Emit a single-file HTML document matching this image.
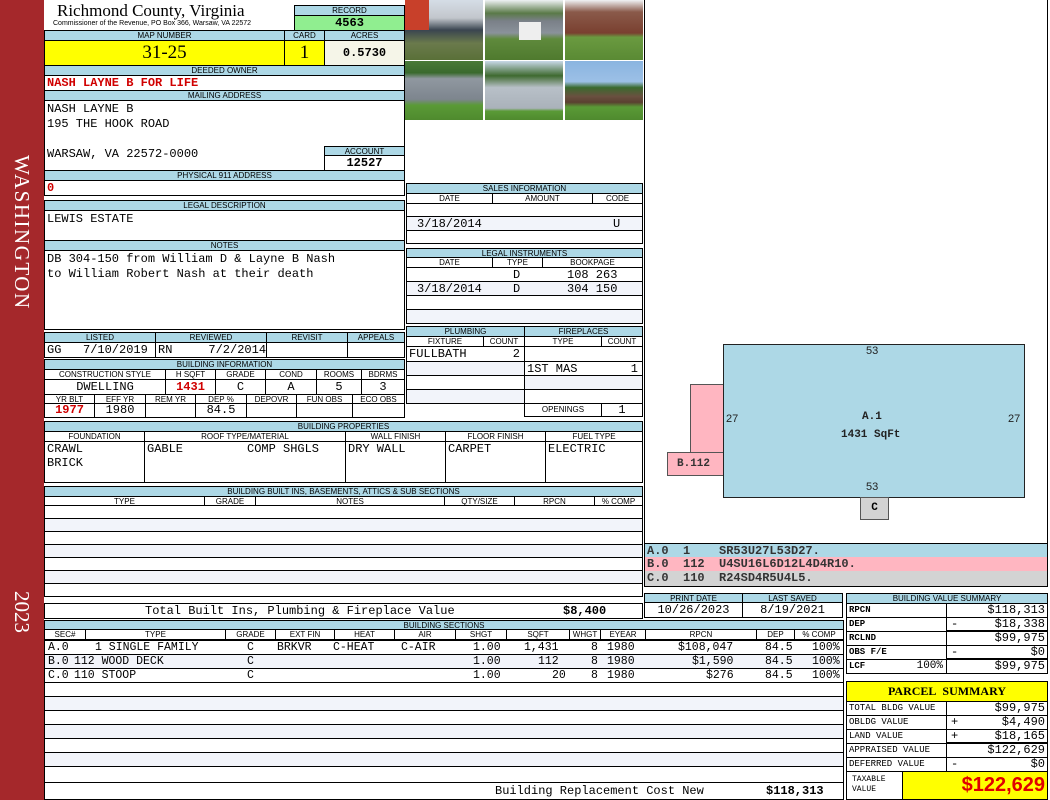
<!DOCTYPE html>
<html><head><meta charset="utf-8"><style>
*{margin:0;padding:0;box-sizing:border-box}
body{width:1050px;height:800px;position:relative;background:#fff;overflow:hidden;font-family:"Liberation Mono",monospace;font-size:12px;color:#000}
div{position:absolute}
.c{border:1px solid #000;background:#fff;white-space:nowrap;overflow:hidden;padding:0 2px}
.l{background:#add8e6;font-family:"Liberation Sans",sans-serif;font-size:8px;text-align:center;line-height:9px}
.r{text-align:right}.ce{text-align:center}
.red{color:#d00000;font-weight:bold}
.st{background:#f2f4fa}
</style></head><body>
<div style="left:0;top:0;width:44px;height:800px;background:#a5282b"></div>
<div style="left:7px;top:155px;width:30px;height:175px;color:#fff;font-family:'Liberation Serif',serif;font-size:21px;letter-spacing:1.5px;writing-mode:vertical-rl;line-height:30px">WASHINGTON</div>
<div style="left:7px;top:591px;width:30px;height:40px;color:#fff;font-family:'Liberation Serif',serif;font-size:21px;writing-mode:vertical-rl;line-height:30px">2023</div>

<div style="left:57px;top:1px;font-family:'Liberation Serif',serif;font-size:17px;line-height:20px">Richmond County, Virginia</div>
<div style="left:53px;top:20px;font-family:'Liberation Sans',sans-serif;font-size:7px;line-height:8px">Commissioner of the Revenue, PO Box 366, Warsaw, VA 22572</div>
<div class="c l" style="left:294px;top:5px;width:111px;height:11px">RECORD</div>
<div class="c" style="left:294px;top:15px;width:111px;height:16px;background:#90ee90;text-align:center;font-weight:bold;line-height:14px;font-size:12px">4563</div>
<div class="c l" style="left:44px;top:30px;width:241px;height:11px">MAP NUMBER</div>
<div class="c l" style="left:284px;top:30px;width:41px;height:11px">CARD</div>
<div class="c l" style="left:324px;top:30px;width:81px;height:11px">ACRES</div>
<div class="c" style="left:44px;top:40px;width:241px;height:26px;background:#ffff00;font-family:'Liberation Serif',serif;font-size:19px;text-align:center;line-height:24px">31-25</div>
<div class="c" style="left:284px;top:40px;width:41px;height:26px;background:#ffff00;font-family:'Liberation Serif',serif;font-size:19px;text-align:center;line-height:24px">1</div>
<div class="c" style="left:324px;top:40px;width:81px;height:26px;background:#f5f5e8;text-align:center;font-weight:bold;line-height:24px">0.5730</div>
<div class="c l" style="left:44px;top:65px;width:361px;height:11px">DEEDED OWNER</div>
<div class="c red" style="left:44px;top:75px;width:361px;height:16px;line-height:15px">NASH LAYNE B FOR LIFE</div>
<div class="c l" style="left:44px;top:90px;width:361px;height:11px">MAILING ADDRESS</div>
<div class="c" style="left:44px;top:100px;width:361px;height:71px;line-height:15px;padding-top:1px">NASH LAYNE B<br>195 THE HOOK ROAD<br><br>WARSAW, VA 22572-0000</div>
<div class="c l" style="left:324px;top:146px;width:81px;height:10px">ACCOUNT</div>
<div class="c" style="left:324px;top:155px;width:81px;height:16px;text-align:center;font-weight:bold;line-height:14px">12527</div>
<div class="c l" style="left:44px;top:170px;width:361px;height:11px">PHYSICAL 911 ADDRESS</div>
<div class="c red" style="left:44px;top:180px;width:361px;height:16px;line-height:15px">0</div>
<div class="c l" style="left:44px;top:200px;width:361px;height:11px">LEGAL DESCRIPTION</div>
<div class="c" style="left:44px;top:210px;width:361px;height:31px;line-height:16px">LEWIS ESTATE</div>
<div class="c l" style="left:44px;top:240px;width:361px;height:11px">NOTES</div>
<div class="c" style="left:44px;top:250px;width:361px;height:80px;line-height:15px;padding-top:1px">DB 304-150 from William D &amp; Layne B Nash<br>to William Robert Nash at their death</div>

<div class="c l" style="left:44px;top:332px;width:112px;height:11px">LISTED</div>
<div class="c l" style="left:155px;top:332px;width:112px;height:11px">REVIEWED</div>
<div class="c l" style="left:266px;top:332px;width:82px;height:11px">REVISIT</div>
<div class="c l" style="left:347px;top:332px;width:58px;height:11px">APPEALS</div>
<div class="c" style="left:44px;top:342px;width:112px;height:16px;line-height:14px">GG&nbsp;&nbsp;&nbsp;7/10/2019</div>
<div class="c" style="left:155px;top:342px;width:112px;height:16px;line-height:14px">RN&nbsp;&nbsp;&nbsp;&nbsp;&nbsp;7/2/2014</div>
<div class="c" style="left:266px;top:342px;width:82px;height:16px"></div>
<div class="c" style="left:347px;top:342px;width:58px;height:16px"></div>

<div class="c l" style="left:44px;top:359px;width:361px;height:11px">BUILDING INFORMATION</div>
<div class="c l" style="left:44px;top:369px;width:122px;height:11px;background:#fff">CONSTRUCTION STYLE</div>
<div class="c l" style="left:165px;top:369px;width:51px;height:11px;background:#fff">H SQFT</div>
<div class="c l" style="left:215px;top:369px;width:51px;height:11px;background:#fff">GRADE</div>
<div class="c l" style="left:265px;top:369px;width:52px;height:11px;background:#fff">COND</div>
<div class="c l" style="left:316px;top:369px;width:46px;height:11px;background:#fff">ROOMS</div>
<div class="c l" style="left:361px;top:369px;width:44px;height:11px;background:#fff">BDRMS</div>
<div class="c ce" style="left:44px;top:379px;width:122px;height:16px;line-height:14px">DWELLING</div>
<div class="c ce red" style="left:165px;top:379px;width:51px;height:16px;line-height:14px">1431</div>
<div class="c ce" style="left:215px;top:379px;width:51px;height:16px;line-height:14px">C</div>
<div class="c ce" style="left:265px;top:379px;width:52px;height:16px;line-height:14px">A</div>
<div class="c ce" style="left:316px;top:379px;width:46px;height:16px;line-height:14px">5</div>
<div class="c ce" style="left:361px;top:379px;width:44px;height:16px;line-height:14px">3</div>
<div class="c l" style="left:44px;top:394px;width:51px;height:10px;background:#fff">YR BLT</div>
<div class="c l" style="left:94px;top:394px;width:52px;height:10px;background:#fff">EFF YR</div>
<div class="c l" style="left:145px;top:394px;width:51px;height:10px;background:#fff">REM YR</div>
<div class="c l" style="left:195px;top:394px;width:52px;height:10px;background:#fff">DEP %</div>
<div class="c l" style="left:246px;top:394px;width:51px;height:10px;background:#fff">DEPOVR</div>
<div class="c l" style="left:296px;top:394px;width:57px;height:10px;background:#fff">FUN OBS</div>
<div class="c l" style="left:352px;top:394px;width:53px;height:10px;background:#fff">ECO OBS</div>
<div class="c ce red" style="left:44px;top:403px;width:51px;height:15px;line-height:13px">1977</div>
<div class="c ce" style="left:94px;top:403px;width:52px;height:15px;line-height:13px">1980</div>
<div class="c" style="left:145px;top:403px;width:51px;height:15px"></div>
<div class="c ce" style="left:195px;top:403px;width:52px;height:15px;line-height:13px">84.5</div>
<div class="c" style="left:246px;top:403px;width:51px;height:15px"></div>
<div class="c" style="left:296px;top:403px;width:57px;height:15px"></div>
<div class="c" style="left:352px;top:403px;width:53px;height:15px"></div>

<!-- photos -->
<div style="left:405px;top:0;width:78px;height:60px;overflow:hidden;background:linear-gradient(180deg,#d5dde6 0%,#c2c6cc 30%,#3a4550 50%,#6a7a4c 72%,#5a7038 100%)"><div style="left:0;top:0;width:24px;height:30px;background:#c8402a"></div></div>
<div style="left:485px;top:0;width:78px;height:60px;overflow:hidden;background:linear-gradient(180deg,#eef2f4 0%,#5a7a48 22%,#7a8088 35%,#8a929a 55%,#5f8a3c 65%,#4f7a2e 100%)"><div style="left:34px;top:22px;width:22px;height:18px;background:#eee"></div></div>
<div style="left:565px;top:0;width:78px;height:60px;background:linear-gradient(180deg,#f0f2f4 0%,#8a5a4a 20%,#7a4030 55%,#6a9a40 62%,#5a8a34 100%)"></div>
<div style="left:405px;top:61px;width:78px;height:59px;background:linear-gradient(180deg,#4a7a38 0%,#3a6a2e 20%,#9098a0 30%,#7d858e 65%,#5a9a36 75%,#4f8a2e 100%)"></div>
<div style="left:485px;top:61px;width:78px;height:59px;background:linear-gradient(180deg,#c8d8e8 0%,#3f6a30 25%,#b8c0c8 45%,#aab2ba 80%,#5a9a36 85%,#4f8a2e 100%)"></div>
<div style="left:565px;top:61px;width:78px;height:59px;background:linear-gradient(180deg,#8ab4e0 0%,#9cc0e6 35%,#3a6a2e 45%,#6a5040 60%,#5a4030 70%,#5a9a36 78%,#4f8a2e 100%)"></div>

<div class="c l" style="left:406px;top:183px;width:237px;height:11px">SALES INFORMATION</div>
<div class="c l" style="left:406px;top:193px;width:87px;height:11px;background:#fff">DATE</div>
<div class="c l" style="left:492px;top:193px;width:101px;height:11px;background:#fff">AMOUNT</div>
<div class="c l" style="left:592px;top:193px;width:51px;height:11px;background:#fff">CODE</div>
<div class="c" style="left:406px;top:203px;width:237px;height:14px"></div>
<div class="c st" style="left:406px;top:216px;width:237px;height:15px;line-height:14px;padding-left:10px">3/18/2014<span style="position:absolute;left:206px">U</span></div>
<div class="c" style="left:406px;top:230px;width:237px;height:14px"></div>
<div class="c l" style="left:406px;top:248px;width:237px;height:10px">LEGAL INSTRUMENTS</div>
<div class="c l" style="left:406px;top:257px;width:87px;height:11px;background:#fff">DATE</div>
<div class="c l" style="left:492px;top:257px;width:51px;height:11px;background:#fff">TYPE</div>
<div class="c l" style="left:542px;top:257px;width:101px;height:11px;background:#fff">BOOKPAGE</div>
<div class="c" style="left:406px;top:267px;width:237px;height:15px;line-height:14px"><span style="position:absolute;left:106px">D</span><span style="position:absolute;left:160px">108 263</span></div>
<div class="c st" style="left:406px;top:281px;width:237px;height:15px;line-height:14px;padding-left:10px">3/18/2014<span style="position:absolute;left:106px">D</span><span style="position:absolute;left:160px">304 150</span></div>
<div class="c" style="left:406px;top:295px;width:237px;height:15px"></div>
<div class="c st" style="left:406px;top:309px;width:237px;height:15px"></div>

<div class="c l" style="left:406px;top:326px;width:119px;height:11px">PLUMBING</div>
<div class="c l" style="left:524px;top:326px;width:119px;height:11px">FIREPLACES</div>
<div class="c l" style="left:406px;top:336px;width:78px;height:11px;background:#fff">FIXTURE</div>
<div class="c l" style="left:483px;top:336px;width:42px;height:11px;background:#fff">COUNT</div>
<div class="c l" style="left:524px;top:336px;width:78px;height:11px;background:#fff">TYPE</div>
<div class="c l" style="left:601px;top:336px;width:42px;height:11px;background:#fff">COUNT</div>
<div class="c" style="left:406px;top:346px;width:119px;height:16px;line-height:15px">FULLBATH<span style="position:absolute;right:4px">2</span></div>
<div class="c st" style="left:406px;top:361px;width:119px;height:15px"></div>
<div class="c" style="left:406px;top:375px;width:119px;height:15px"></div>
<div class="c st" style="left:406px;top:389px;width:119px;height:15px"></div>
<div class="c" style="left:524px;top:346px;width:119px;height:16px"></div>
<div class="c" style="left:524px;top:361px;width:119px;height:15px;line-height:14px">1ST MAS<span style="position:absolute;right:4px">1</span></div>
<div class="c st" style="left:524px;top:375px;width:119px;height:15px"></div>
<div class="c" style="left:524px;top:389px;width:119px;height:15px"></div>
<div class="c l" style="left:524px;top:403px;width:78px;height:14px;background:#fff;line-height:12px">OPENINGS</div>
<div class="c ce" style="left:601px;top:403px;width:42px;height:14px;line-height:12px">1</div>

<div class="c l" style="left:44px;top:421px;width:599px;height:11px">BUILDING PROPERTIES</div>
<div class="c l" style="left:44px;top:431px;width:101px;height:11px;background:#fff">FOUNDATION</div>
<div class="c l" style="left:144px;top:431px;width:202px;height:11px;background:#fff">ROOF TYPE/MATERIAL</div>
<div class="c l" style="left:345px;top:431px;width:101px;height:11px;background:#fff">WALL FINISH</div>
<div class="c l" style="left:445px;top:431px;width:101px;height:11px;background:#fff">FLOOR FINISH</div>
<div class="c l" style="left:545px;top:431px;width:98px;height:11px;background:#fff">FUEL TYPE</div>
<div class="c" style="left:44px;top:441px;width:101px;height:42px;line-height:14px">CRAWL<br>BRICK</div>
<div class="c" style="left:144px;top:441px;width:202px;height:42px;line-height:14px">GABLE<span style="position:absolute;left:102px">COMP SHGLS</span></div>
<div class="c" style="left:345px;top:441px;width:101px;height:42px;line-height:14px">DRY WALL</div>
<div class="c" style="left:445px;top:441px;width:101px;height:42px;line-height:14px">CARPET</div>
<div class="c" style="left:545px;top:441px;width:98px;height:42px;line-height:14px">ELECTRIC</div>

<div class="c l" style="left:44px;top:486px;width:599px;height:11px">BUILDING BUILT INS, BASEMENTS, ATTICS &amp; SUB SECTIONS</div>
<div class="c l" style="left:44px;top:496px;width:161px;height:10px;background:#fff">TYPE</div>
<div class="c l" style="left:204px;top:496px;width:52px;height:10px;background:#fff">GRADE</div>
<div class="c l" style="left:255px;top:496px;width:190px;height:10px;background:#fff">NOTES</div>
<div class="c l" style="left:444px;top:496px;width:71px;height:10px;background:#fff">QTY/SIZE</div>
<div class="c l" style="left:514px;top:496px;width:81px;height:10px;background:#fff">RPCN</div>
<div class="c l" style="left:594px;top:496px;width:49px;height:10px;background:#fff">% COMP</div>
<div class="c" style="left:44px;top:505px;width:599px;height:14px"></div>
<div class="c st" style="left:44px;top:518px;width:599px;height:14px"></div>
<div class="c" style="left:44px;top:531px;width:599px;height:14px"></div>
<div class="c st" style="left:44px;top:544px;width:599px;height:14px"></div>
<div class="c" style="left:44px;top:557px;width:599px;height:14px"></div>
<div class="c st" style="left:44px;top:570px;width:599px;height:14px"></div>
<div class="c" style="left:44px;top:583px;width:599px;height:14px"></div>
<div class="c" style="left:44px;top:603px;width:599px;height:16px;line-height:15px"><span style="position:absolute;left:100px">Total Built Ins, Plumbing &amp; Fireplace Value</span><span style="position:absolute;left:518px;font-weight:bold">$8,400</span></div>

<div class="c l" style="left:44px;top:620px;width:800px;height:10px">BUILDING SECTIONS</div>
<div class="c l" style="left:44px;top:629px;width:42px;height:11px;background:#fff">SEC#</div>
<div class="c l" style="left:85px;top:629px;width:141px;height:11px;background:#fff">TYPE</div>
<div class="c l" style="left:225px;top:629px;width:51px;height:11px;background:#fff">GRADE</div>
<div class="c l" style="left:275px;top:629px;width:60px;height:11px;background:#fff">EXT FIN</div>
<div class="c l" style="left:334px;top:629px;width:61px;height:11px;background:#fff">HEAT</div>
<div class="c l" style="left:394px;top:629px;width:62px;height:11px;background:#fff">AIR</div>
<div class="c l" style="left:455px;top:629px;width:52px;height:11px;background:#fff">SHGT</div>
<div class="c l" style="left:506px;top:629px;width:64px;height:11px;background:#fff">SQFT</div>
<div class="c l" style="left:569px;top:629px;width:32px;height:11px;background:#fff">WHGT</div>
<div class="c l" style="left:600px;top:629px;width:46px;height:11px;background:#fff">EYEAR</div>
<div class="c l" style="left:645px;top:629px;width:112px;height:11px;background:#fff">RPCN</div>
<div class="c l" style="left:756px;top:629px;width:39px;height:11px;background:#fff">DEP</div>
<div class="c l" style="left:794px;top:629px;width:50px;height:11px;background:#fff">% COMP</div>

<div class="c" style="left:44px;top:640px;width:800px;height:15px;line-height:14px;font-size:11.5px"><span style="position:absolute;left:3px">A.0</span><span style="position:absolute;left:50px">1 SINGLE FAMILY</span><span style="position:absolute;left:202px">C</span><span style="position:absolute;left:232px">BRKVR</span><span style="position:absolute;left:288px">C-HEAT</span><span style="position:absolute;left:356px">C-AIR</span><span style="position:absolute;left:428px">1.00</span><span style="position:absolute;left:479px">1,431</span><span style="position:absolute;left:546px">8</span><span style="position:absolute;left:562px">1980</span><span style="position:absolute;left:633px">$108,047</span><span style="position:absolute;left:720px">84.5</span><span style="position:absolute;left:767px">100%</span></div>
<div class="c st" style="left:44px;top:654px;width:800px;height:15px;line-height:14px;font-size:11.5px"><span style="position:absolute;left:3px">B.0</span><span style="position:absolute;left:29px">112 WOOD DECK</span><span style="position:absolute;left:202px">C</span><span style="position:absolute;left:428px">1.00</span><span style="position:absolute;left:493px">112</span><span style="position:absolute;left:546px">8</span><span style="position:absolute;left:562px">1980</span><span style="position:absolute;left:647px">$1,590</span><span style="position:absolute;left:720px">84.5</span><span style="position:absolute;left:767px">100%</span></div>
<div class="c" style="left:44px;top:668px;width:800px;height:15px;line-height:14px;font-size:11.5px"><span style="position:absolute;left:3px">C.0</span><span style="position:absolute;left:29px">110 STOOP</span><span style="position:absolute;left:202px">C</span><span style="position:absolute;left:428px">1.00</span><span style="position:absolute;left:507px">20</span><span style="position:absolute;left:546px">8</span><span style="position:absolute;left:562px">1980</span><span style="position:absolute;left:661px">$276</span><span style="position:absolute;left:720px">84.5</span><span style="position:absolute;left:767px">100%</span></div>
<div class="c" style="left:44px;top:682px;width:800px;height:15px"></div>
<div class="c st" style="left:44px;top:696px;width:800px;height:15px"></div>
<div class="c" style="left:44px;top:710px;width:800px;height:15px"></div>
<div class="c st" style="left:44px;top:724px;width:800px;height:15px"></div>
<div class="c" style="left:44px;top:738px;width:800px;height:15px"></div>
<div class="c st" style="left:44px;top:752px;width:800px;height:15px"></div>
<div class="c" style="left:44px;top:766px;width:800px;height:17px"></div>
<div class="c" style="left:44px;top:782px;width:800px;height:18px;line-height:16px"><span style="position:absolute;left:450px">Building Replacement Cost New</span><span style="position:absolute;left:721px;font-weight:bold">$118,313</span></div>

<div style="left:644px;top:0;width:1px;height:545px;background:#000"></div>
<div style="left:1047px;top:0;width:1px;height:545px;background:#000"></div>
<div style="left:690px;top:384px;width:34px;height:92px;background:#ffb6c1;border:1px solid #555;border-right:none"></div>
<div style="left:667px;top:452px;width:57px;height:24px;background:#ffb6c1;border:1px solid #555;border-right:none;font-size:11px;font-weight:bold;color:#333;line-height:22px;padding-left:9px">B.112</div>
<div style="left:723px;top:344px;width:302px;height:154px;background:#add8e6;border:1px solid #222"></div>
<div style="left:860px;top:497px;width:29px;height:23px;background:#d3d3d3;border:1px solid #555;font-size:11px;font-weight:bold;text-align:center;line-height:21px">C</div>
<div style="left:866px;top:345px;font-family:'Liberation Sans',sans-serif;font-size:11px;color:#222">53</div>
<div style="left:866px;top:481px;font-family:'Liberation Sans',sans-serif;font-size:11px;color:#222">53</div>
<div style="left:726px;top:413px;font-family:'Liberation Sans',sans-serif;font-size:11px;color:#222">27</div>
<div style="left:1008px;top:413px;font-family:'Liberation Sans',sans-serif;font-size:11px;color:#222">27</div>
<div style="left:862px;top:411px;font-size:11px;font-weight:bold;color:#222">A.1</div>
<div style="left:841px;top:429px;font-size:11px;font-weight:bold;color:#222">1431 SqFt</div>

<div class="c" style="left:644px;top:543px;width:404px;height:15px;background:#add8e6;font-weight:bold;line-height:14px;color:#333">A.0&nbsp;&nbsp;1&nbsp;&nbsp;&nbsp;&nbsp;SR53U27L53D27.</div>
<div class="c" style="left:644px;top:557px;width:404px;height:15px;background:#ffb6c1;font-weight:bold;line-height:14px;color:#333;border-top:none">B.0&nbsp;&nbsp;112&nbsp;&nbsp;U4SU16L6D12L4D4R10.</div>
<div class="c" style="left:644px;top:571px;width:404px;height:16px;background:#d3d3d3;font-weight:bold;line-height:14px;color:#333;border-top:none">C.0&nbsp;&nbsp;110&nbsp;&nbsp;R24SD4R5U4L5.</div>

<div class="c l" style="left:644px;top:593px;width:99px;height:10px">PRINT DATE</div>
<div class="c l" style="left:742px;top:593px;width:101px;height:10px">LAST SAVED</div>
<div class="c ce" style="left:644px;top:602px;width:99px;height:16px;line-height:14px">10/26/2023</div>
<div class="c ce" style="left:742px;top:602px;width:101px;height:16px;line-height:14px">8/19/2021</div>

<div class="c l" style="left:846px;top:593px;width:202px;height:11px">BUILDING VALUE SUMMARY</div>
<div class="c" style="left:846px;top:603px;width:101px;height:15px;font-size:9px;line-height:13px;font-weight:bold">RPCN</div>
<div class="c r" style="left:946px;top:603px;width:102px;height:15px;line-height:13px">$118,313</div>
<div class="c" style="left:846px;top:617px;width:101px;height:15px;font-size:9px;line-height:13px;font-weight:bold">DEP</div>
<div class="c r" style="left:946px;top:617px;width:102px;height:15px;line-height:13px;border-bottom:2px solid #000"><span style="position:absolute;left:4px">-</span>$18,338</div>
<div class="c" style="left:846px;top:631px;width:101px;height:15px;font-size:9px;line-height:13px;font-weight:bold">RCLND</div>
<div class="c r" style="left:946px;top:631px;width:102px;height:15px;line-height:13px">$99,975</div>
<div class="c" style="left:846px;top:645px;width:101px;height:15px;font-size:9px;line-height:13px;font-weight:bold">OBS F/E</div>
<div class="c r" style="left:946px;top:645px;width:102px;height:15px;line-height:13px;border-bottom:2px solid #000"><span style="position:absolute;left:4px">-</span>$0</div>
<div class="c" style="left:846px;top:659px;width:101px;height:15px;font-size:9px;line-height:13px;font-weight:bold">LCF<span style="position:absolute;right:3px;font-size:11px;font-weight:normal">100%</span></div>
<div class="c r" style="left:946px;top:659px;width:102px;height:15px;line-height:13px">$99,975</div>

<div class="c" style="left:846px;top:681px;width:202px;height:21px;background:#ffff00;font-weight:bold;text-align:center;line-height:19px;font-size:12px;font-family:'Liberation Serif',serif">PARCEL&nbsp;&nbsp;SUMMARY</div>
<div class="c" style="left:846px;top:701px;width:101px;height:15px;font-size:9px;line-height:13px">TOTAL BLDG VALUE</div>
<div class="c r" style="left:946px;top:701px;width:102px;height:15px;line-height:13px">$99,975</div>
<div class="c" style="left:846px;top:715px;width:101px;height:15px;font-size:9px;line-height:13px">OBLDG VALUE</div>
<div class="c r" style="left:946px;top:715px;width:102px;height:15px;line-height:13px"><span style="position:absolute;left:4px">+</span>$4,490</div>
<div class="c" style="left:846px;top:729px;width:101px;height:15px;font-size:9px;line-height:13px">LAND VALUE</div>
<div class="c r" style="left:946px;top:729px;width:102px;height:15px;line-height:13px;border-bottom:2px solid #000"><span style="position:absolute;left:4px">+</span>$18,165</div>
<div class="c" style="left:846px;top:743px;width:101px;height:15px;font-size:9px;line-height:13px">APPRAISED VALUE</div>
<div class="c r" style="left:946px;top:743px;width:102px;height:15px;line-height:13px">$122,629</div>
<div class="c" style="left:846px;top:757px;width:101px;height:15px;font-size:9px;line-height:13px">DEFERRED VALUE</div>
<div class="c r" style="left:946px;top:757px;width:102px;height:15px;line-height:13px"><span style="position:absolute;left:4px">-</span>$0</div>
<div class="c" style="left:846px;top:771px;width:57px;height:29px;font-size:8px;line-height:10px;padding-top:3px;padding-left:5px">TAXABLE<br>VALUE</div>
<div class="c r" style="left:902px;top:771px;width:146px;height:29px;background:#ffff00;color:#e00000;font-family:'Liberation Sans',sans-serif;font-weight:bold;font-size:20px;line-height:26px;padding-right:2px">$122,629</div>
</body></html>
